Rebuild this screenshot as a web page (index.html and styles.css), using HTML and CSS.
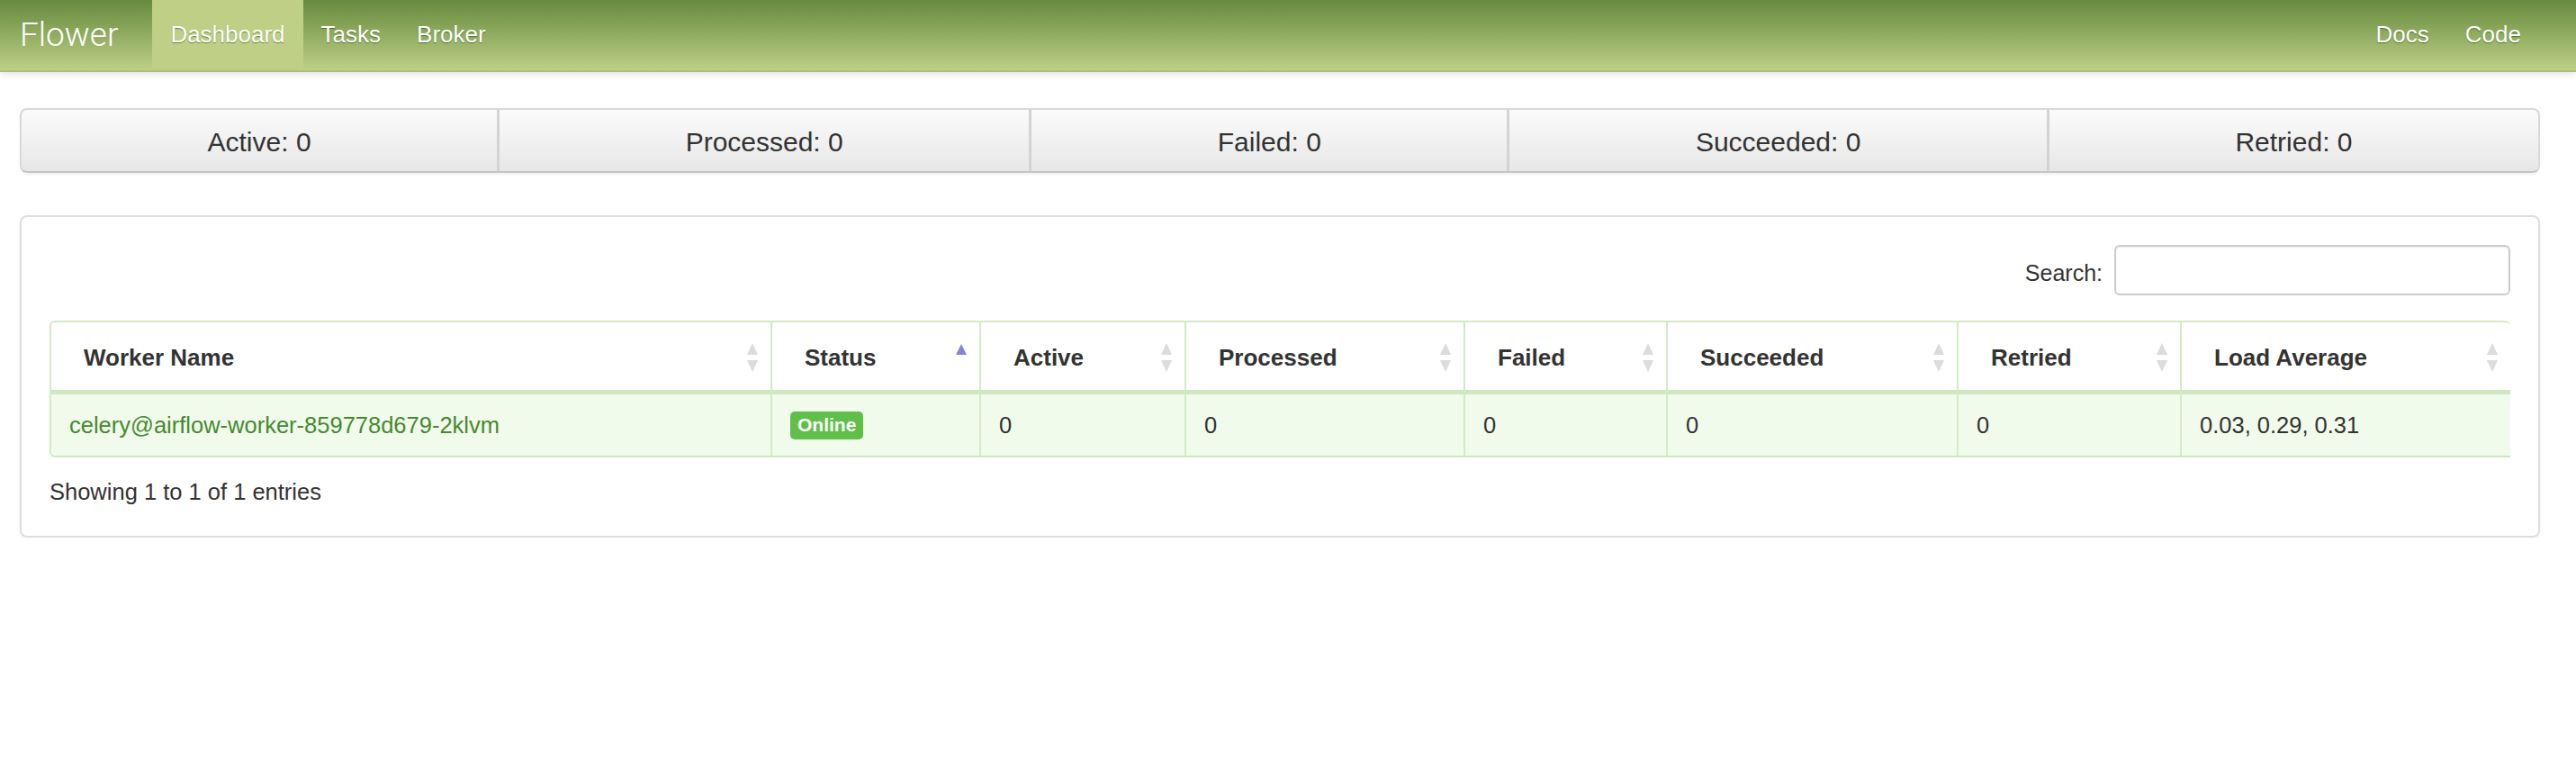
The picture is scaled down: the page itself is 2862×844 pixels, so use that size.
FILE: index.html
```html
<!DOCTYPE html>
<html>
<head>
<meta charset="utf-8">
<title>Flower</title>
<link rel="stylesheet" href="styles.css">
</head>
<body>
<header class="navbar">
  <a class="brand" href="#">Flower</a>
  <nav class="nav">
    <a class="nav-item active" href="#">Dashboard</a>
    <a class="nav-item" href="#">Tasks</a>
    <a class="nav-item" href="#">Broker</a>
  </nav>
  <nav class="nav nav-right">
    <a class="nav-item" href="#">Docs</a>
    <a class="nav-item" href="#">Code</a>
  </nav>
</header>

<main class="container">
  <div class="stats">
    <div class="stat">Active: 0</div>
    <div class="stat">Processed: 0</div>
    <div class="stat">Failed: 0</div>
    <div class="stat">Succeeded: 0</div>
    <div class="stat">Retried: 0</div>
  </div>

  <section class="panel">
    <div class="search-row">
      <label class="search-label">Search:</label>
      <input class="search-input" type="text">
    </div>
    <table class="workers">
      <colgroup>
        <col style="width:801px"><col style="width:232px"><col style="width:228px"><col style="width:310px"><col style="width:225px"><col style="width:323px"><col style="width:248px"><col>
      </colgroup>
      <thead>
        <tr>
          <th><div class="th-in"><span>Worker Name</span><svg class="sort" viewBox="0 0 12 32"><path d="M6 0 L12 13 L0 13 Z"/><path d="M0 19 L12 19 L6 32 Z"/></svg></div></th>
          <th><div class="th-in"><span>Status</span><svg class="sort asc" viewBox="0 0 12 32"><path d="M6 1 L12 13 L0 13 Z"/></svg></div></th>
          <th><div class="th-in"><span>Active</span><svg class="sort" viewBox="0 0 12 32"><path d="M6 0 L12 13 L0 13 Z"/><path d="M0 19 L12 19 L6 32 Z"/></svg></div></th>
          <th><div class="th-in"><span>Processed</span><svg class="sort" viewBox="0 0 12 32"><path d="M6 0 L12 13 L0 13 Z"/><path d="M0 19 L12 19 L6 32 Z"/></svg></div></th>
          <th><div class="th-in"><span>Failed</span><svg class="sort" viewBox="0 0 12 32"><path d="M6 0 L12 13 L0 13 Z"/><path d="M0 19 L12 19 L6 32 Z"/></svg></div></th>
          <th><div class="th-in"><span>Succeeded</span><svg class="sort" viewBox="0 0 12 32"><path d="M6 0 L12 13 L0 13 Z"/><path d="M0 19 L12 19 L6 32 Z"/></svg></div></th>
          <th><div class="th-in"><span>Retried</span><svg class="sort" viewBox="0 0 12 32"><path d="M6 0 L12 13 L0 13 Z"/><path d="M0 19 L12 19 L6 32 Z"/></svg></div></th>
          <th><div class="th-in"><span>Load Average</span><svg class="sort" viewBox="0 0 12 32"><path d="M6 0 L12 13 L0 13 Z"/><path d="M0 19 L12 19 L6 32 Z"/></svg></div></th>
        </tr>
      </thead>
      <tbody>
        <tr>
          <td><a class="worker-link" href="#">celery@airflow-worker-859778d679-2klvm</a></td>
          <td><span class="badge">Online</span></td>
          <td>0</td>
          <td>0</td>
          <td>0</td>
          <td>0</td>
          <td>0</td>
          <td>0.03, 0.29, 0.31</td>
        </tr>
      </tbody>
    </table>
    <div class="info">Showing 1 to 1 of 1 entries</div>
  </section>
</main>
</body>
</html>
```

FILE: styles.css
```css
* { box-sizing: border-box; }

body {
  margin: 0;
  font-family: "Liberation Sans", Arial, sans-serif;
  color: #333;
  background: #fff;
}

a { text-decoration: none; }

.navbar {
  display: flex;
  align-items: stretch;
  height: 80px;
  padding: 0 41px 0 22px;
  background: linear-gradient(#668a3d, #bdd087);
  border-bottom: 2px solid #aebf73;
  box-shadow: 0 2px 8px rgba(0, 0, 0, 0.13);
}

.brand {
  display: flex;
  align-items: center;
  font-family: Roboto, "Liberation Sans", sans-serif;
  font-weight: 300;
  font-size: 37px;
  color: #fff;
  margin-right: 38px;
  padding-bottom: 2px;
}

.nav {
  display: flex;
  align-items: stretch;
}

.nav-right { margin-left: auto; }

.nav-item {
  display: flex;
  align-items: center;
  padding: 0 20px 2px;
  font-size: 26px;
  color: #fff;
  text-shadow: 0 1px 1px rgba(40, 60, 10, 0.55);
}

.nav-item.active {
  background: #bfd086;
}

.container {
  padding: 40px 40px 0 22px;
}

.stats {
  display: flex;
  height: 72px;
  border: 2px solid #d9d9d9;
  border-bottom-color: #c4c4c4;
  border-radius: 8px;
  background: linear-gradient(#fbfbfb, #e7e7e7);
  box-shadow: 0 2px 3px rgba(0, 0, 0, 0.06);
}

.stat {
  flex: 1 1 auto;
  display: flex;
  align-items: center;
  justify-content: center;
  padding-top: 3px;
  font-size: 30px;
  color: #333;
  border-left: 3px solid #d3d3d3;
}

.stat:first-child { border-left: 0; }

.panel {
  margin-top: 47px;
  height: 358px;
  padding: 31px 31px 0;
  border: 2px solid #dedede;
  border-radius: 8px;
  box-shadow: 0 2px 3px rgba(0, 0, 0, 0.05);
}

.search-row {
  display: flex;
  justify-content: flex-end;
  align-items: center;
  gap: 13px;
  height: 56px;
}

.search-label {
  padding-top: 7px;
  font-size: 25px;
  color: #333;
}

.search-input {
  width: 440px;
  height: 56px;
  border: 2px solid #cccccc;
  border-radius: 6px;
  box-shadow: inset 0 1px 2px rgba(0, 0, 0, 0.08);
  background: #fff;
}

.workers {
  width: 100%;
  margin-top: 28px;
  border-collapse: separate;
  border-spacing: 0;
  table-layout: fixed;
  font-size: 25.5px;
}

.workers th {
  height: 82px;
  padding: 3px 14px 0 36px;
  text-align: left;
  font-size: 26px;
  font-weight: bold;
  color: #333;
  border-top: 2px solid #d3eac6;
  border-left: 2px solid #d3eac6;
  border-bottom: 5px solid #cfe8c1;
  background: #fff;
}

.workers th:first-child { border-top-left-radius: 6px; }
.workers th:last-child { border-top-right-radius: 6px; }

.th-in {
  display: flex;
  justify-content: space-between;
  align-items: center;
}

.sort {
  width: 12px;
  height: 32px;
  fill: #dcdcdc;
  flex: none;
}

.sort.asc {
  fill: #8383d9;
}

.workers td {
  height: 70px;
  padding: 0 20px;
  background: #f1fbec;
  border-left: 2px solid #d3eac6;
  border-bottom: 2px solid #cfe8c1;
  color: #333;
}

.workers td:first-child { border-bottom-left-radius: 6px; }

.worker-link { color: #468a2e; }

.badge {
  display: inline-block;
  padding: 3px 8px 4px;
  font-size: 21px;
  font-weight: bold;
  color: #fff;
  background: #5fbf49;
  border-radius: 5px;
  line-height: 24px;
}

.info {
  margin-top: 24px;
  font-size: 25.5px;
  color: #333;
}
```
